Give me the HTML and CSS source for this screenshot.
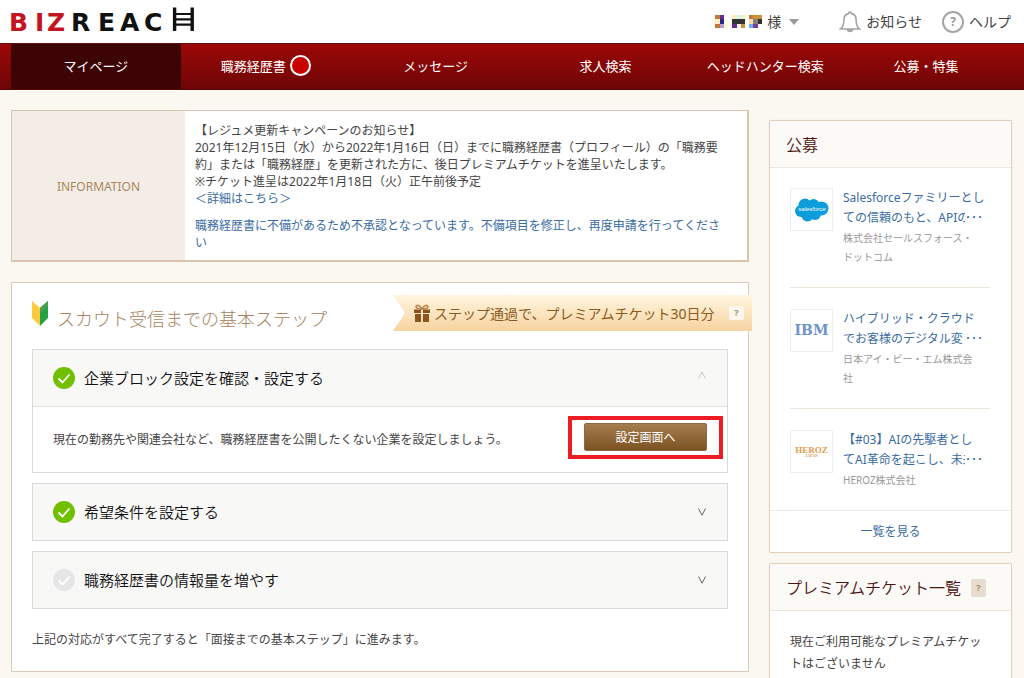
FILE: index.html
```html
<!DOCTYPE html>
<html lang="ja">
<head>
<meta charset="utf-8">
<meta name="viewport" content="width=device-width, initial-scale=1">
<title>BIZREACH マイページ</title>
<link rel="stylesheet" href="styles.css">
</head>
<body>
<header class="site-header">
  <a class="logo" href="#" aria-label="BIZREACH">
    <svg width="190" height="30" viewBox="-4 0 190 30">
      <text class="logo-red" y="26" x="-2 24 36">BIZ</text>
      <text class="logo-black" y="26" x="60 87 109 133">REAC</text>
      <path d="M163.600 2.500v23.500M181.200 2.500v23.500" stroke="#111" stroke-width="3.400"/>
      <path d="M163 9h18M163 14.300h18M163 19.600h18" stroke="#111" stroke-width="2.200"/>
    </svg>
  </a>
  <div class="user-menu">
    <button class="account" type="button">
      <svg class="mosaic" width="48" height="13" viewBox="0 0 48 13" aria-hidden="true">
        <path fill="#c07a3a" d="M0 0h5v4H0zM0 9h5v4H0zM34 0h4v4h-4z"/>
        <path fill="#6a2c91" d="M5 0h4v4H5zM17 9h5v4h-5z"/>
        <path fill="#232a8c" d="M5 4h4v5H5z"/>
        <path fill="#b9a0dd" d="M5 9h4v4H5z"/>
        <path fill="#ffeeb8" d="M0 4h5v5H0zM17 0h5v4h-5zM26 0h4v4h-4z"/>
        <path fill="#fffbd2" d="M9 4h4v9H9z"/>
        <path fill="#c4f8fb" d="M22 0h4v4h-4z"/>
        <path fill="#333" d="M17 4h13v5H17zM43 4h4v5h-4z"/>
        <path fill="#808080" d="M38 4h5v5h-5z"/>
        <path fill="#cf9138" d="M26 9h4v4h-4zM38 0h9v4h-9z"/>
        <path fill="#ffd9a0" d="M34 4h4v5h-4z"/>
        <path fill="#67b0f2" d="M34 9h4v4h-4z"/>
        <path fill="#7b3a96" d="M38 9h5v4h-5z"/>
      </svg>
      <span>様</span>
      <svg width="10" height="6" viewBox="0 0 10 6" aria-hidden="true"><path d="M0 0h10L5 6z" fill="#999"/></svg>
    </button>
    <a class="user-link notice" href="#">
      <svg width="22" height="22" viewBox="0 0 22 22" fill="none" stroke="#a5a5a5" stroke-width="1.600" aria-hidden="true"><path d="M9.500 2.600a1.500 1.500 0 0 1 3 0c3 .7 4.600 3 4.600 5.800 0 5 .6 7.600 3.400 9.600h-19c2.800-2 3.400-4.600 3.400-9.600 0-2.800 1.600-5.100 4.600-5.800z"/><path d="M8.500 19c.6 2 4.400 2 5 0z" fill="#a5a5a5"/></svg>
      お知らせ
    </a>
    <a class="user-link" href="#"><span class="help-icon">?</span>ヘルプ</a>
  </div>
</header>

<nav class="global-nav">
  <a class="nav-item active" href="#">マイページ</a>
  <a class="nav-item" href="#">職務経歴書<span class="nav-dot"></span></a>
  <a class="nav-item" href="#">メッセージ</a>
  <a class="nav-item" href="#">求人検索</a>
  <a class="nav-item" href="#">ヘッドハンター検索</a>
  <a class="nav-item" href="#">公募・特集</a>
</nav>

<div class="page">
  <main class="main">
    <section class="info">
      <h2 class="info-label">INFORMATION</h2>
      <div class="info-body">
        <p>【レジュメ更新キャンペーンのお知らせ】<br>2021年12月15日（水）から2022年1月16日（日）までに職務経歴書（プロフィール）の「職務要約」または「職務経歴」を更新された方に、後日プレミアムチケットを進呈いたします。<br>※チケット進呈は2022年1月18日（火）正午前後予定<br><a href="#">＜詳細はこちら＞</a></p>
        <p><a href="#">職務経歴書に不備があるため不承認となっています。不備項目を修正し、再度申請を行ってください</a></p>
      </div>
    </section>

    <section class="steps">
      <div class="steps-head">
        <svg class="beginner" width="16" height="25" viewBox="0 0 16 25" aria-hidden="true"><path d="M0 0l8 7v18l-8-8z" fill="#fbcb3d"/><path d="M16 0L8 7v18l8-8z" fill="#23a13f"/><path d="M16 0L8 7v6l8-8z" fill="#4b9a52"/></svg>
        <h1 class="steps-title">スカウト受信までの基本ステップ</h1>
        <div class="ribbon">
          <svg width="16" height="18" viewBox="0 0 16 18" aria-hidden="true"><path d="M0 5.500h7v3.500H0zM9 5.500h7v3.500H9zM1 10h6v8H1zM9 10h6v8H9z" fill="#8a541c"/><path d="M8 5C6 1 2 .500 2 2.800 2 4.500 5 5 8 5c3 0 6-.5 6-2.200C14 .500 10 1 8 5z" fill="none" stroke="#b98550" stroke-width="1.600"/></svg>
          <span>ステップ通過で、プレミアムチケット30日分</span>
          <button class="hint hint-light" type="button">?</button>
        </div>
      </div>

      <article class="step">
        <button class="step-head" type="button" aria-expanded="true">
          <svg class="check" viewBox="0 0 22 22" aria-hidden="true"><circle cx="11" cy="11" r="11" fill="#72bf00"/><path d="M5.500 11.500l4 4 7-8" fill="none" stroke="#fff" stroke-width="1.800"/></svg>
          <span class="step-name">企業ブロック設定を確認・設定する</span>
          <svg class="caret caret-open" viewBox="0 0 8 8" aria-hidden="true"><path d="M.5 7.500L4 .800l3.500 6.700"/></svg>
        </button>
        <div class="step-body">
          <p>現在の勤務先や関連会社など、職務経歴書を公開したくない企業を設定しましょう。</p>
          <div class="highlight"><button class="action" type="button">設定画面へ</button></div>
        </div>
      </article>

      <article class="step">
        <button class="step-head" type="button" aria-expanded="false">
          <svg class="check" viewBox="0 0 22 22" aria-hidden="true"><circle cx="11" cy="11" r="11" fill="#72bf00"/><path d="M5.500 11.500l4 4 7-8" fill="none" stroke="#fff" stroke-width="1.800"/></svg>
          <span class="step-name">希望条件を設定する</span>
          <svg class="caret" viewBox="0 0 8 8" aria-hidden="true"><path d="M.5 .500L4 7.200 7.500 .500"/></svg>
        </button>
      </article>

      <article class="step">
        <button class="step-head" type="button" aria-expanded="false">
          <svg class="check" viewBox="0 0 22 22" aria-hidden="true"><circle cx="11" cy="11" r="11" fill="#e6e6e6"/><path d="M5.500 11.500l4 4 7-8" fill="none" stroke="#fff" stroke-width="1.800"/></svg>
          <span class="step-name">職務経歴書の情報量を増やす</span>
          <svg class="caret" viewBox="0 0 8 8" aria-hidden="true"><path d="M.5 .500L4 7.200 7.500 .500"/></svg>
        </button>
      </article>

      <p class="steps-note">上記の対応がすべて完了すると「面接までの基本ステップ」に進みます。</p>
    </section>
  </main>

  <aside class="side">
    <section class="card">
      <h2 class="card-head">公募</h2>
      <ul class="jobs">
        <li class="job">
          <span class="job-logo"><svg width="34" height="24" viewBox="0 0 34 24" aria-hidden="true"><g fill="#0d9dda"><circle cx="10" cy="7" r="6.500"/><circle cx="18.500" cy="7" r="6"/><circle cx="26.500" cy="10.500" r="7"/><circle cx="6" cy="13" r="6"/><circle cx="12.500" cy="17.500" r="6"/><circle cx="20" cy="16" r="6"/></g><text class="sf-text" x="17" y="13" text-anchor="middle">salesforce</text></svg></span>
          <div class="job-text">
            <a class="job-title" href="#">Salesforceファミリーとし<br>ての信頼のもと、APIの<span class="more">･･･</span></a>
            <p class="company">株式会社セールスフォース・ドットコム</p>
          </div>
        </li>
        <li class="job">
          <span class="job-logo logo-ibm">IBM</span>
          <div class="job-text">
            <a class="job-title" href="#">ハイブリッド・クラウド<br>でお客様のデジタル変<span class="more">･･･</span></a>
            <p class="company">日本アイ・ビー・エム株式会社</p>
          </div>
        </li>
        <li class="job">
          <span class="job-logo logo-heroz">HEROZ<small>JAPAN</small></span>
          <div class="job-text">
            <a class="job-title" href="#">【#03】AIの先駆者とし<br>てAI革命を起こし、未来<span class="more">･･･</span></a>
            <p class="company">HEROZ株式会社</p>
          </div>
        </li>
      </ul>
      <a class="card-more" href="#">一覧を見る</a>
    </section>

    <section class="card">
      <h2 class="card-head">プレミアムチケット一覧<button class="hint" type="button">?</button></h2>
      <p class="ticket-text">現在ご利用可能なプレミアムチケットはございません</p>
    </section>
  </aside>
</div>
</body>
</html>
```

FILE: styles.css
```css
* {
  box-sizing: border-box;
}

body {
  margin: 0;
  background: #fbf8f1;
  color: #444;
  font-family: "Noto Sans", "Noto Sans CJK JP", sans-serif;
  font-size: 12px;
  line-height: 17px;
}

h1, h2, p, ul {
  margin: 0;
  padding: 0;
  font-weight: inherit;
}

ul {
  list-style: none;
}

a {
  color: #3a6ca3;
  text-decoration: none;
}

button {
  padding: 0;
  border: 0;
  background: none;
  color: inherit;
  font: inherit;
  cursor: pointer;
}

svg {
  display: block;
  flex: none;
}

/* Header */
.site-header {
  display: flex;
  align-items: center;
  justify-content: space-between;
  height: 43px;
  padding: 0 13px 0 7px;
  background: #fff;
}

.logo {
  margin-bottom: 4px;
}

.logo text {
  font-family: "DejaVu Sans", sans-serif;
  font-size: 25px;
  font-weight: 700;
}

.logo-red {
  fill: #c3141f;
}

.logo-black {
  fill: #111;
}

.user-menu {
  display: flex;
  align-items: center;
  font-size: 14px;
  line-height: 20px;
}

.account {
  display: flex;
  align-items: center;
  gap: 4px;
}

.account span {
  margin-right: 4px;
}

.user-link {
  display: flex;
  align-items: center;
  gap: 5px;
  color: #444;
}

.notice {
  margin: 0 20px 0 40px;
}

.help-icon {
  width: 22px;
  height: 22px;
  border: 2px solid #a5a5a5;
  border-radius: 50%;
  color: #999;
  font-size: 12px;
  font-weight: 700;
  line-height: 18px;
  text-align: center;
}

/* Navigation */
.global-nav {
  display: grid;
  grid-template-columns: 170fr 170fr 170fr 170fr 150fr 172fr;
  height: 47px;
  padding: 0 12px 0 11px;
  border-top: 1px solid #5c1010;
  border-bottom: 1px solid #5a0505;
  background: linear-gradient(#9c0707, #6e0606);
}

.nav-item {
  display: flex;
  align-items: center;
  justify-content: center;
  gap: 4px;
  color: #fff;
  font-size: 13px;
}

.nav-item.active {
  background: #3c0404;
}

.nav-dot {
  width: 21px;
  height: 21px;
  margin-bottom: 2px;
  border: 2px solid #fff;
  border-radius: 50%;
  background: #c80000;
}

/* Page columns */
.page {
  display: grid;
  grid-template-columns: minmax(0, 1fr) 243px;
  gap: 20px;
  align-items: start;
  padding: 20px 12px 20px 11px;
}

.info {
  display: flex;
  border: 1px solid #d8c3ae;
  border-width: 1px 2px 2px 1px;
  background: #fff;
}

.info-label {
  display: flex;
  align-items: center;
  justify-content: center;
  width: 173px;
  padding-top: 2px;
  background: #f4ede7;
  color: #a98860;
  font-size: 12px;
}

.info-body {
  display: flex;
  flex: 1;
  flex-direction: column;
  gap: 10px;
  padding: 11px 17px 9px 10px;
}

/* Steps */
.steps {
  margin-top: 20px;
  padding: 11px 20px 23px;
  border: 1px solid #dcc9b8;
  background: #fff;
}

.steps-head {
  display: flex;
  align-items: center;
  gap: 9px;
  margin: 0 -24px 17px 0;
}

.steps-title {
  flex: 1;
  padding-top: 12px;
  color: #a5835f;
  font-size: 18px;
  font-weight: 300;
  line-height: 26px;
}

.ribbon {
  display: flex;
  align-items: center;
  width: 359px;
  height: 36px;
  padding: 0 8px 0 21px;
  gap: 4px;
  background: linear-gradient(#fff6e0, #f6d3a0);
  clip-path: polygon(0 0, 100% 0, 100% 100%, 0 100%, 12px 50%);
  color: #8a5a20;
  font-size: 14px;
}

.hint {
  width: 15px;
  height: 18px;
  border-radius: 2px;
  background: #e8dccc;
  color: #998c80;
  font-size: 9px;
  font-weight: 700;
  line-height: 18px;
}

.hint-light {
  height: 14px;
  margin-left: auto;
  background: #fdf6ea;
  line-height: 14px;
}

.step {
  margin-bottom: 10px;
  border: 1px solid #dadada;
  background: #fff;
}

.step-head {
  display: flex;
  align-items: center;
  gap: 9px;
  width: 100%;
  height: 56px;
  padding: 0 21px 0 20px;
  background: #f8f8f7;
  color: #111;
  font-size: 15px;
  font-weight: 350;
  line-height: 22px;
  text-align: left;
}

.step-name {
  flex: 1;
}

.check {
  width: 22px;
  height: 22px;
}

.caret {
  width: 8px;
  height: 8px;
  fill: none;
  stroke: #666;
}

.caret-open {
  margin-bottom: 6px;
  stroke: #c8c8c8;
}

.step-body {
  display: flex;
  align-items: center;
  justify-content: space-between;
  height: 66px;
  padding: 0 4px 4px 20px;
  border-top: 1px solid #e4e4e4;
}

.step-body p {
  padding-top: 4px;
}

.highlight {
  padding: 3px 12px 4px;
  border: 4px solid #ed1c24;
}

.action {
  display: block;
  width: 123px;
  height: 28px;
  border: 1px solid #87694a;
  border-radius: 2px;
  background: linear-gradient(#a47d50, #7c5221);
  color: #fff;
}

.steps-note {
  padding-top: 12px;
}

/* Side column */
.side {
  padding-top: 10px;
}

.card {
  margin-bottom: 10px;
  border: 1px solid #e2cfc0;
  border-radius: 2px;
  background: #fff;
  box-shadow: 0 0 1px #e2cfc0;
}

.card-head {
  display: flex;
  align-items: center;
  gap: 10px;
  height: 47px;
  padding: 2px 16px 0;
  border-bottom: 1px solid #eee6dd;
  background: #fbfaf7;
  color: #4c1512;
  font-size: 16px;
  font-weight: 350;
}

.jobs {
  padding: 0 21px 0 20px;
}

.job {
  display: flex;
  gap: 10px;
  padding: 20px 0;
}

.job + .job {
  border-top: 1px solid #ece4da;
  padding-top: 21px;
}

.job-logo {
  display: flex;
  flex: none;
  flex-direction: column;
  align-items: center;
  justify-content: center;
  width: 43px;
  height: 43px;
  border: 1px solid #eee;
}

.sf-text {
  fill: #fff;
  font-family: "Liberation Sans", sans-serif;
  font-size: 6px;
  font-style: italic;
}

.logo-ibm {
  color: #6f93cc;
  font-family: "DejaVu Serif", serif;
  font-size: 14px;
  font-weight: 700;
}

.logo-heroz {
  color: #e39b4c;
  font-family: "Liberation Serif", serif;
  font-size: 9px;
  font-weight: 700;
  line-height: 8px;
}

.logo-heroz small {
  font-size: 4px;
  line-height: 4px;
}

.job-text {
  flex: 1;
  min-width: 0;
}

.job-title {
  display: block;
  position: relative;
  height: 40px;
  margin-bottom: 1px;
  line-height: 20px;
  white-space: nowrap;
}

.more {
  position: absolute;
  right: 7px;
  bottom: 0;
  background: #fff;
}

.company {
  color: #999;
  font-size: 10px;
  line-height: 19px;
  padding-right: 12px;
}

.card-more {
  display: block;
  padding: 12px 0;
  border-top: 1px solid #f0e9e1;
  text-align: center;
}

.ticket-text {
  padding: 20px;
  line-height: 22px;
}
```
